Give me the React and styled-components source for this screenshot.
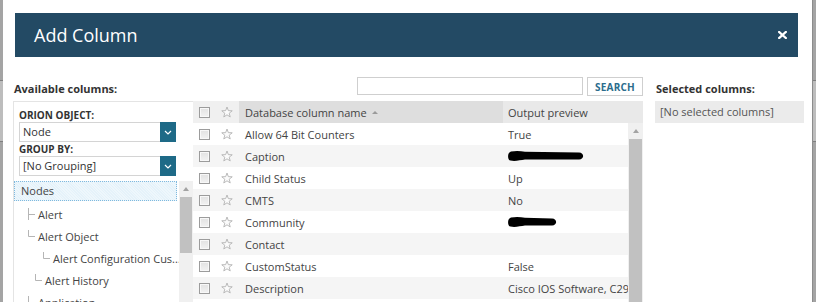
import React from "react";
import styled, { createGlobalStyle } from "styled-components";

const GlobalStyle = createGlobalStyle`
  html, body { margin: 0; padding: 0; }
  body {
    font-family: "Open Sans", "Noto Sans", sans-serif;
    background: #ffffff;
    overflow: hidden;
  }
  #root { width: 816px; height: 302px; overflow: hidden; }
`;

const Page = styled.div`
  display: flex;
  width: 816px;
  height: 302px;
  overflow: hidden;
`;

const Edge = styled.div`
  width: ${(p) => p.$w}px;
  flex: none;
  background: linear-gradient(
    to bottom,
    #a4a4a4 0,
    #a4a4a4 80px,
    #7f7f7f 80px,
    #7f7f7f 81px,
    #bdbdbd 81px,
    #bdbdbd 141px,
    #7f7f7f 141px,
    #7f7f7f 142px,
    #a4a4a4 142px
  );
  border-left: ${(p) => (p.$right ? "1px solid #8c8c8c" : "none")};
  box-sizing: border-box;
`;

const Dialog = styled.div`
  flex: 1;
  background: #fff;
  padding-top: 13px;
  display: flex;
  flex-direction: column;
  min-width: 0;
`;

const Header = styled.div`
  margin: 0 14px 0 12px;
  height: 44px;
  background: #234a64;
  display: flex;
  align-items: center;
  justify-content: space-between;
  padding: 0 11px 0 19px;
`;

const Title = styled.div`
  color: #ffffff;
  font-size: 18px;
  line-height: 44px;
`;

const Body = styled.div`
  display: grid;
  grid-template-columns: 180px 450px 1fr;
  grid-template-rows: 24px auto;
  padding: 20px 8px 0 10px;
`;

const SectionLabel = styled.div`
  font-weight: 700;
  font-size: 11px;
  line-height: 15px;
  color: #333;
  margin-top: 4px;
  padding-left: 1px;
  white-space: nowrap;
`;

const RightCell = styled.div`
  padding-left: 12px;
`;

const SearchBar = styled.div`
  display: flex;
  justify-content: flex-end;
  align-items: flex-start;
  gap: 4px;
`;

const SearchInput = styled.input`
  width: 226px;
  height: 18px;
  box-sizing: border-box;
  border: 1px solid #cfcfcf;
  margin: 0;
  padding: 0 4px;
  font-family: inherit;
  font-size: 11px;
  outline: none;
`;

const SearchButton = styled.button`
  width: 56px;
  height: 19px;
  box-sizing: border-box;
  border: 1px solid #cfcfcf;
  background: #fff;
  margin: 0;
  padding: 0;
  font-family: inherit;
  font-weight: 700;
  font-size: 10px;
  color: #2b6c8c;
  letter-spacing: 0.2px;
`;

const LeftPanel = styled.div`
  border-top: 1px solid #e4e4e4;
  border-left: 1px solid #e4e4e4;
  height: 201px;
  box-sizing: border-box;
  display: flex;
  flex-direction: column;
  overflow: hidden;
`;

const Filters = styled.div`
  padding: 6px 17px 0 5px;
`;

const FieldLabel = styled.div`
  font-weight: 700;
  font-size: 10px;
  line-height: 14px;
  color: #333;
  white-space: nowrap;
`;

const Select = styled.div`
  height: 20px;
  box-sizing: border-box;
  border: 1px solid #d4d4d4;
  display: flex;
  align-items: stretch;
  font-size: 11px;
  color: #333;
`;

const SelectText = styled.div`
  flex: 1;
  padding-left: 3px;
  line-height: 18px;
  white-space: nowrap;
`;

const SelectButton = styled.div`
  width: 16px;
  background: #1e6a87;
  display: flex;
  align-items: center;
  justify-content: center;
  margin: -1px -1px -1px 0;
`;

const TreeArea = styled.div`
  display: flex;
  margin-top: 5px;
  flex: 1;
  min-height: 0;
`;

const TreeList = styled.div`
  flex: 1;
  min-width: 0;
`;

const RootNode = styled.div`
  height: 20px;
  box-sizing: border-box;
  margin: 0 2px 2px 0;
  border: 1px dotted #7fb9de;
  background: repeating-linear-gradient(
    45deg,
    #e5f2fa 0,
    #e5f2fa 1px,
    #eef7fc 1px,
    #eef7fc 2px
  );
  padding-left: 6px;
  font-size: 11px;
  line-height: 18px;
  color: #444;
`;

const TreeRow = styled.div`
  height: 22px;
  display: flex;
  align-items: center;
  padding-left: ${(p) => p.$indent}px;
  font-size: 11px;
  color: #444;
  white-space: nowrap;
  overflow: hidden;
`;

const Connector = styled.svg`
  flex: none;
  display: block;
`;

const ScrollTrack = styled.div`
  width: ${(p) => p.$w}px;
  flex: none;
  background: #f0f0f0;
  display: flex;
  flex-direction: column;
  align-items: center;
`;

const ScrollArrow = styled.div`
  margin-top: ${(p) => p.$top}px;
  width: 0;
  height: 0;
  border-left: 3.5px solid transparent;
  border-right: 3.5px solid transparent;
  border-bottom: 4px solid #a3a3a3;
`;

const ScrollThumb = styled.div`
  margin-top: ${(p) => p.$top}px;
  width: ${(p) => p.$w}px;
  height: ${(p) => p.$h}px;
  background: #c1c1c1;
`;

const Table = styled.div`
  display: flex;
  flex-direction: column;
  height: 201px;
  overflow: hidden;
`;

const HeadRow = styled.div`
  display: grid;
  grid-template-columns: 22px 24px 264px 140px;
  height: 22px;
  flex: none;
`;

const HeadCell = styled.div`
  background: ${(p) => p.$bg};
  display: flex;
  align-items: center;
  justify-content: ${(p) => (p.$center ? "center" : "flex-start")};
  padding-left: ${(p) => p.$pad || 0}px;
  font-size: 11px;
  color: #444;
  white-space: nowrap;
`;

const SortArrow = styled.span`
  display: inline-block;
  width: 0;
  height: 0;
  margin-left: 5px;
  border-left: 3px solid transparent;
  border-right: 3px solid transparent;
  border-bottom: 3px solid #9a9a9a;
`;

const TableBody = styled.div`
  display: flex;
  flex: 1;
  min-height: 0;
`;

const Rows = styled.div`
  width: 435px;
  flex: none;
`;

const Row = styled.div`
  display: grid;
  grid-template-columns: 22px 24px 264px 125px;
  height: 22px;
  background: ${(p) => (p.$alt ? "#f5f5f5" : "#ffffff")};
`;

const IconCell = styled.div`
  display: flex;
  align-items: center;
  justify-content: center;
`;

const TextCell = styled.div`
  display: flex;
  align-items: center;
  padding-left: ${(p) => p.$pad}px;
  font-size: 11px;
  color: #444;
  white-space: nowrap;
  overflow: hidden;
`;

const Checkbox = styled.span`
  width: 11px;
  height: 11px;
  box-sizing: border-box;
  border: 1px solid #9c9c9c;
  background: linear-gradient(#e2e2e2, #f2f2f2);
  box-shadow: inset 0 0 0 1px #f8f8f8;
`;

const SelectedBox = styled.div`
  height: 22px;
  background: #ebebeb;
  padding-left: 5px;
  font-size: 11px;
  line-height: 22px;
  color: #555;
  white-space: nowrap;
`;

const Chevron = () => (
  <svg width="8" height="5" viewBox="0 0 8 5">
    <path d="M1 1 L4 4 L7 1" fill="none" stroke="#fff" strokeWidth="1.2" />
  </svg>
);

const CloseIcon = () => (
  <svg width="9" height="8" viewBox="0 0 9 8">
    <path
      d="M1.2 1 L7.8 7 M7.8 1 L1.2 7"
      stroke="#fff"
      strokeWidth="2.3"
      strokeLinecap="square"
    />
  </svg>
);

const Star = () => (
  <svg width="12" height="12" viewBox="0 0 12 12">
    <polygon
      points="6,1 7.35,4.64 11.23,4.8 8.19,7.21 9.23,10.95 6,8.8 2.77,10.95 3.81,7.21 0.77,4.8 4.65,4.64"
      fill="#fbfbfb"
      stroke="#b3b3b3"
      strokeWidth="0.9"
      strokeLinejoin="round"
    />
  </svg>
);

/* hand-drawn black redaction marker stroke */
const RedactionBlob = ({ w }) => (
  <svg width={w} height="12" viewBox={`0 0 ${w} 12`}>
    <path
      d={`M4 1.6 C9 0.4 14 1 18 1.8 L${w - 5} 2.4 C${w + 0.5} 2.6 ${w + 0.5} 9.2 ${w - 5} 9.4 L18 9.6 C13 10.4 8 11.4 3.5 10.6 C0.2 9.8 0.2 2.6 4 1.6 Z`}
      fill="#000"
    />
  </svg>
);

const TreeConnector = ({ type }) => (
  <Connector width="10" height="22" viewBox="0 0 10 22">
    {type === "tee" ? (
      <path d="M0.5 5 V17 M0.5 11.5 H7" stroke="#b5b5b5" strokeWidth="1" fill="none" />
    ) : (
      <path d="M0.5 5 V11.5 H7" stroke="#b5b5b5" strokeWidth="1" fill="none" />
    )}
  </Connector>
);

const treeItems = [
  { label: "Alert", x: 28, type: "tee" },
  { label: "Alert Object", x: 28, type: "elbow" },
  { label: "Alert Configuration Cus...", x: 43, type: "elbow" },
  { label: "Alert History", x: 35, type: "elbow" },
  { label: "Application", x: 28, type: "elbow" },
];

const rows = [
  { name: "Allow 64 Bit Counters", out: "True" },
  { name: "Caption", redact: 77 },
  { name: "Child Status", out: "Up" },
  { name: "CMTS", out: "No" },
  { name: "Community", redact: 50 },
  { name: "Contact", out: "" },
  { name: "CustomStatus", out: "False" },
  { name: "Description", out: "Cisco IOS Software, C2960 Software" },
  { name: "DNS", out: "" },
];

export default function App() {
  return (
    <>
      <GlobalStyle />
      <Page>
        <Edge $w={3} />
        <Dialog>
          <Header>
            <Title>Add Column</Title>
            <CloseIcon />
          </Header>
          <Body>
            <SectionLabel>Available columns:</SectionLabel>
            <SearchBar>
              <SearchInput type="text" />
              <SearchButton>SEARCH</SearchButton>
            </SearchBar>
            <RightCell>
              <SectionLabel>Selected columns:</SectionLabel>
            </RightCell>

            <LeftPanel>
              <Filters>
                <FieldLabel>ORION OBJECT:</FieldLabel>
                <Select>
                  <SelectText>Node</SelectText>
                  <SelectButton>
                    <Chevron />
                  </SelectButton>
                </Select>
                <FieldLabel>GROUP BY:</FieldLabel>
                <Select>
                  <SelectText>[No Grouping]</SelectText>
                  <SelectButton>
                    <Chevron />
                  </SelectButton>
                </Select>
              </Filters>
              <TreeArea>
                <TreeList>
                  <RootNode>Nodes</RootNode>
                  {treeItems.map((t) => (
                    <TreeRow key={t.label} $indent={t.x - 14}>
                      <TreeConnector type={t.type} />
                      {t.label}
                    </TreeRow>
                  ))}
                </TreeList>
                <ScrollTrack $w={14}>
                  <ScrollArrow $top={6} />
                  <ScrollThumb $top={6} $w={12} $h={56} />
                </ScrollTrack>
              </TreeArea>
            </LeftPanel>

            <Table>
              <HeadRow>
                <HeadCell $bg="#f0f0f0" $center>
                  <Checkbox />
                </HeadCell>
                <HeadCell $bg="#f0f0f0" $center>
                  <Star />
                </HeadCell>
                <HeadCell $bg="#dedede" $pad={6}>
                  Database column name
                  <SortArrow />
                </HeadCell>
                <HeadCell $bg="#e9e9e9" $pad={5}>
                  Output preview
                </HeadCell>
              </HeadRow>
              <TableBody>
                <Rows>
                  {rows.map((r, i) => (
                    <Row key={r.name} $alt={i % 2 === 1}>
                      <IconCell>
                        <Checkbox />
                      </IconCell>
                      <IconCell>
                        <Star />
                      </IconCell>
                      <TextCell $pad={6}>{r.name}</TextCell>
                      <TextCell $pad={4}>
                        {r.redact ? <RedactionBlob w={r.redact} /> : <span style={{ paddingLeft: 1 }}>{r.out}</span>}
                      </TextCell>
                    </Row>
                  ))}
                </Rows>
                <ScrollTrack $w={15}>
                  <ScrollArrow $top={6} />
                  <ScrollThumb $top={6} $w={13} $h={200} />
                </ScrollTrack>
              </TableBody>
            </Table>

            <RightCell>
              <SelectedBox>[No selected columns]</SelectedBox>
            </RightCell>
          </Body>
        </Dialog>
        <Edge $w={4} $right />
      </Page>
    </>
  );
}
